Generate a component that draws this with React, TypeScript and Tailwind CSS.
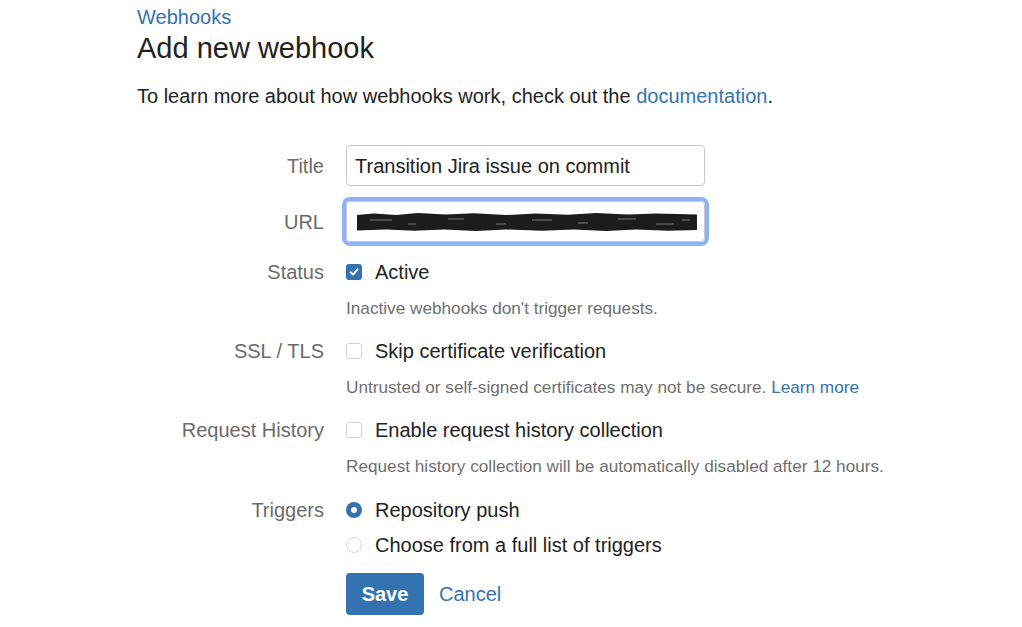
import React from "react";

function Checkbox({ checked = false }: { checked?: boolean }) {
  return checked ? (
    <span className="flex size-4 items-center justify-center rounded-[3px] bg-[#3572b0]">
      <svg width="12" height="12" viewBox="0 0 12 12" fill="none">
        <path d="M2.5 6.2 L5 8.7 L9.6 3.3" stroke="white" strokeWidth="1.9" strokeLinecap="round" strokeLinejoin="round" />
      </svg>
    </span>
  ) : (
    <span className="block size-4 rounded-[3px] border border-[#d4d4d4] bg-white" />
  );
}

function Radio({ checked = false }: { checked?: boolean }) {
  return checked ? (
    <span className="flex size-4 items-center justify-center rounded-full bg-[#3572b0]">
      <span className="block size-[6px] rounded-full bg-white" />
    </span>
  ) : (
    <span className="block size-4 rounded-full border border-[#d9d9d9] bg-white" />
  );
}

function Label({ children }: { children: React.ReactNode }) {
  return (
    <div className="flex h-6 items-center justify-end text-[20px] text-[#6b6b6b]">
      {children}
    </div>
  );
}

function OptionRow({
  label,
  control,
  text,
  help,
  className = "",
}: {
  label?: string;
  control: React.ReactNode;
  text: string;
  help?: React.ReactNode;
  className?: string;
}) {
  return (
    <div className={`grid grid-cols-[187px_1fr] gap-x-[22px] ${className}`}>
      <Label>{label}</Label>
      <div>
        <div className="flex h-6 items-center gap-[13px] text-[20px] text-[#222]">
          {control}
          <span>{text}</span>
        </div>
        {help && (
          <p className="mt-[13px] text-[17.2px] leading-[22px] text-[#6f6f6f]">{help}</p>
        )}
      </div>
    </div>
  );
}

export default function App() {
  return (
    <div
      className="min-h-[627px] bg-white pl-[137px] pt-[5px]"
      style={{ fontFamily: '"Liberation Sans", Arial, sans-serif' }}
    >
      <a className="block text-[20px] leading-6 text-[#3572b0]">Webhooks</a>
      <h1 className="mt-[2px] text-[29px] leading-[34px] text-[#222]">Add new webhook</h1>
      <p className="mt-[19px] text-[20px] leading-6 text-[#222]">
        To learn more about how webhooks work, check out the{" "}
        <a className="text-[#3572b0]">documentation</a>.
      </p>

      <div className="mt-[37px]">
        <div className="grid grid-cols-[187px_1fr] items-center gap-x-[22px]">
          <div className="text-right text-[20px] text-[#6b6b6b]">Title</div>
          <div className="flex h-[41px] w-[359px] items-center rounded-[4px] border border-[#c8c8c8] px-2 text-[20px] text-[#222]">
            Transition Jira issue on commit
          </div>
        </div>
        <div className="mt-[15px] grid grid-cols-[187px_1fr] items-center gap-x-[22px]">
          <div className="text-right text-[20px] text-[#6b6b6b]">URL</div>
          <div className="flex h-[41px] w-[359px] items-center rounded-[4px] border border-[#c8c8c8] pl-[9px] ring-[4px] ring-[#8db3f2]">
            <svg className="block shrink-0" width="342" height="20" viewBox="0 0 342 20">
              <path
                d="M1 3 L18 1.5 L40 3 L62 1 L90 2.5 L118 1.2 L150 3 L180 1.5 L212 2.8 L240 1 L272 2.6 L300 1.4 L341 2.5 L341 18 L312 18.8 L280 17.4 L250 19 L218 17.6 L186 18.8 L150 17.5 L120 19 L88 17.6 L58 18.8 L30 17.5 L1 18.5 Z"
                fill="#1c1c1c"
              />
              <path
                d="M14 8 L36 8 M52 12 L60 12 M92 7 L108 7 M140 12 L150 12 M176 8 L196 8 M222 11 L232 11 M262 7 L280 7 M300 12 L318 12 M326 8 L334 8"
                stroke="#7a7a7a"
                strokeWidth="1"
              />
            </svg>
          </div>
        </div>

        <OptionRow
          className="mt-[18px]"
          label="Status"
          control={<Checkbox checked />}
          text="Active"
          help="Inactive webhooks don't trigger requests."
        />
        <OptionRow
          className="mt-[20px]"
          label="SSL / TLS"
          control={<Checkbox />}
          text="Skip certificate verification"
          help={
            <>
              Untrusted or self-signed certificates may not be secure.{" "}
              <a className="text-[#3572b0]">Learn more</a>
            </>
          }
        />
        <OptionRow
          className="mt-[20px]"
          label="Request History"
          control={<Checkbox />}
          text="Enable request history collection"
          help="Request history collection will be automatically disabled after 12 hours."
        />
        <OptionRow
          className="mt-[21px]"
          label="Triggers"
          control={<Radio checked />}
          text="Repository push"
        />
        <OptionRow
          className="mt-[11px]"
          control={<Radio />}
          text="Choose from a full list of triggers"
        />

        <div className="mt-[16px] grid grid-cols-[187px_1fr] gap-x-[22px]">
          <div />
          <div className="flex items-center gap-[15px]">
            <button className="h-[42px] w-[78px] rounded-[4px] bg-[#3572b0] text-[20px] font-bold text-white">
              Save
            </button>
            <a className="text-[20px] text-[#3572b0]">Cancel</a>
          </div>
        </div>
      </div>
    </div>
  );
}
